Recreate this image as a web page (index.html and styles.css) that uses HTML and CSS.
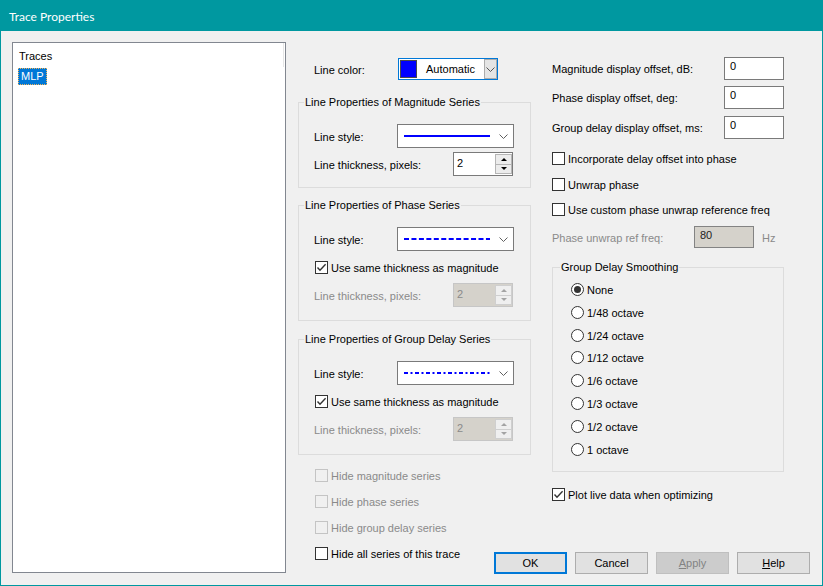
FILE: index.html
```html
<!DOCTYPE html>
<html>
<head>
<meta charset="utf-8">
<title>Trace Properties</title>
<link rel="stylesheet" href="styles.css">
</head>
<body>
<div class="window">
  <div class="titlebar">Trace Properties</div>
  <div class="client">
    <div class="listbox">
      <div class="list-header">Traces</div>
      <div class="list-item"><span class="sel">MLP</span></div>
    </div>
    <div class="main">
      <div class="columns">
        <div class="col-mid">
          <div class="row color-row">
            <span class="lbl w84">Line color:</span>
            <div class="colorcombo">
              <span class="swatch"></span>
              <span class="cc-text">Automatic</span>
              <span class="cc-btn"><svg width="9" height="5" viewBox="0 0 9 5"><polyline points="0.5,0.5 4.5,4.5 8.5,0.5" fill="none" stroke="#555" stroke-width="1"/></svg></span>
            </div>
          </div>

          <fieldset class="group g-mag">
            <legend>Line Properties of Magnitude Series</legend>
            <div class="row grow r-combo">
              <span class="lbl w83">Line style:</span>
              <div class="combo">
                <svg class="linesvg" width="86" height="4" viewBox="0 0 86 4"><line x1="0" y1="2" x2="86" y2="2" stroke="#0000ff" stroke-width="2"/></svg>
                <svg class="chev" width="9" height="5" viewBox="0 0 9 5"><polyline points="0.5,0.5 4.5,4.5 8.5,0.5" fill="none" stroke="#606060" stroke-width="1"/></svg>
              </div>
            </div>
            <div class="row grow r-spin r-spin1">
              <span class="lbl w139">Line thickness, pixels:</span>
              <div class="spin">
                <span class="spin-val">2</span>
                <span class="spin-btns"><span class="sb sb-up"><i class="tri-up"></i></span><span class="sb sb-down"><i class="tri-down"></i></span></span>
              </div>
            </div>
          </fieldset>

          <fieldset class="group g-phase">
            <legend>Line Properties of Phase Series</legend>
            <div class="row grow r-combo">
              <span class="lbl w83">Line style:</span>
              <div class="combo">
                <svg class="linesvg" width="86" height="4" viewBox="0 0 86 4"><line x1="0" y1="2" x2="86" y2="2" stroke="#0000ff" stroke-width="2" stroke-dasharray="5 2.45"/></svg>
                <svg class="chev" width="9" height="5" viewBox="0 0 9 5"><polyline points="0.5,0.5 4.5,4.5 8.5,0.5" fill="none" stroke="#606060" stroke-width="1"/></svg>
              </div>
            </div>
            <div class="row r-check">
              <span class="box"><svg width="11" height="11" viewBox="0 0 11 11"><polyline points="1.5,5.5 4,8.2 9.6,2.2" fill="none" stroke="#333" stroke-width="1.4"/></svg></span>
              <span class="ctext">Use same thickness as magnitude</span>
            </div>
            <div class="row grow r-spin">
              <span class="lbl w139 dis">Line thickness, pixels:</span>
              <div class="spin spin-dis">
                <span class="spin-val">2</span>
                <span class="spin-btns"><span class="sb sb-up"><i class="tri-up"></i></span><span class="sb sb-down"><i class="tri-down"></i></span></span>
              </div>
            </div>
          </fieldset>

          <fieldset class="group g-gd">
            <legend>Line Properties of Group Delay Series</legend>
            <div class="row grow r-combo">
              <span class="lbl w83">Line style:</span>
              <div class="combo">
                <svg class="linesvg" width="86" height="4" viewBox="0 0 86 4"><line x1="0" y1="2" x2="86" y2="2" stroke="#0000ff" stroke-width="2" stroke-dasharray="4 2.5 2 2.5"/></svg>
                <svg class="chev" width="9" height="5" viewBox="0 0 9 5"><polyline points="0.5,0.5 4.5,4.5 8.5,0.5" fill="none" stroke="#606060" stroke-width="1"/></svg>
              </div>
            </div>
            <div class="row r-check">
              <span class="box"><svg width="11" height="11" viewBox="0 0 11 11"><polyline points="1.5,5.5 4,8.2 9.6,2.2" fill="none" stroke="#333" stroke-width="1.4"/></svg></span>
              <span class="ctext">Use same thickness as magnitude</span>
            </div>
            <div class="row grow r-spin">
              <span class="lbl w139 dis">Line thickness, pixels:</span>
              <div class="spin spin-dis">
                <span class="spin-val">2</span>
                <span class="spin-btns"><span class="sb sb-up"><i class="tri-up"></i></span><span class="sb sb-down"><i class="tri-down"></i></span></span>
              </div>
            </div>
          </fieldset>

          <div class="row hide-row first"><span class="box box-dis"></span><span class="ctext dis">Hide magnitude series</span></div>
          <div class="row hide-row"><span class="box box-dis"></span><span class="ctext dis">Hide phase series</span></div>
          <div class="row hide-row"><span class="box box-dis"></span><span class="ctext dis">Hide group delay series</span></div>
        </div>

        <div class="col-right">
          <div class="row erow e1"><span class="lbl w172">Magnitude display offset, dB:</span><span class="edit">0</span></div>
          <div class="row erow e2"><span class="lbl w172">Phase display offset, deg:</span><span class="edit">0</span></div>
          <div class="row erow e3"><span class="lbl w172">Group delay display offset, ms:</span><span class="edit">0</span></div>
          <div class="row rc c1"><span class="box"></span><span class="ctext">Incorporate delay offset into phase</span></div>
          <div class="row rc c2"><span class="box"></span><span class="ctext">Unwrap phase</span></div>
          <div class="row rc c3"><span class="box"></span><span class="ctext">Use custom phase unwrap reference freq</span></div>
          <div class="row freq-row"><span class="lbl w142 dis">Phase unwrap ref freq:</span><span class="edit edit-dis">80</span><span class="hz dis">Hz</span></div>

          <fieldset class="group g-smooth">
            <legend>Group Delay Smoothing</legend>
            <div class="row radio"><svg width="13" height="13" viewBox="0 0 13 13"><circle cx="6.5" cy="6.5" r="6" fill="#fff" stroke="#333" stroke-width="1"/><circle cx="6.5" cy="6.5" r="3.5" fill="#333"/></svg><span class="ctext">None</span></div>
            <div class="row radio"><svg width="13" height="13" viewBox="0 0 13 13"><circle cx="6.5" cy="6.5" r="6" fill="#fff" stroke="#333" stroke-width="1"/></svg><span class="ctext">1/48 octave</span></div>
            <div class="row radio"><svg width="13" height="13" viewBox="0 0 13 13"><circle cx="6.5" cy="6.5" r="6" fill="#fff" stroke="#333" stroke-width="1"/></svg><span class="ctext">1/24 octave</span></div>
            <div class="row radio"><svg width="13" height="13" viewBox="0 0 13 13"><circle cx="6.5" cy="6.5" r="6" fill="#fff" stroke="#333" stroke-width="1"/></svg><span class="ctext">1/12 octave</span></div>
            <div class="row radio"><svg width="13" height="13" viewBox="0 0 13 13"><circle cx="6.5" cy="6.5" r="6" fill="#fff" stroke="#333" stroke-width="1"/></svg><span class="ctext">1/6 octave</span></div>
            <div class="row radio"><svg width="13" height="13" viewBox="0 0 13 13"><circle cx="6.5" cy="6.5" r="6" fill="#fff" stroke="#333" stroke-width="1"/></svg><span class="ctext">1/3 octave</span></div>
            <div class="row radio"><svg width="13" height="13" viewBox="0 0 13 13"><circle cx="6.5" cy="6.5" r="6" fill="#fff" stroke="#333" stroke-width="1"/></svg><span class="ctext">1/2 octave</span></div>
            <div class="row radio"><svg width="13" height="13" viewBox="0 0 13 13"><circle cx="6.5" cy="6.5" r="6" fill="#fff" stroke="#333" stroke-width="1"/></svg><span class="ctext">1 octave</span></div>
          </fieldset>

          <div class="row plot-row"><span class="box"><svg width="11" height="11" viewBox="0 0 11 11"><polyline points="1.5,5.5 4,8.2 9.6,2.2" fill="none" stroke="#333" stroke-width="1.4"/></svg></span><span class="ctext">Plot live data when optimizing</span></div>
        </div>
      </div>

      <div class="bottom">
        <div class="row hide-all"><span class="box"></span><span class="ctext">Hide all series of this trace</span></div>
        <div class="buttons">
          <span class="btn btn-default">OK</span>
          <span class="btn">Cancel</span>
          <span class="btn btn-dis"><u>A</u>pply</span>
          <span class="btn"><u>H</u>elp</span>
        </div>
      </div>
    </div>
  </div>
</div>
</body>
</html>
```

FILE: styles.css
```css
* { box-sizing: border-box; }
html, body { margin: 0; padding: 0; }
body {
  width: 823px;
  height: 586px;
  overflow: hidden;
  background: #f0f0f0;
  font-family: "Liberation Sans", Arial, sans-serif;
  font-size: 11px;
  line-height: 13px;
  color: #000;
}
.window {
  width: 823px;
  height: 586px;
  border: 1px solid #0098a0;
  border-top: 0;
  background: #f0f0f0;
  display: flex;
  flex-direction: column;
}
.titlebar {
  height: 31px;
  flex: none;
  background: #0098a0;
  color: #fff;
  font-family: Lato, "Liberation Sans", sans-serif;
  font-size: 12px;
  padding-left: 8px;
  padding-top: 1px;
  display: flex;
  align-items: center;
}
.client {
  flex: 1;
  display: flex;
  padding: 11px 12px 0 11px;
}
.listbox {
  width: 274px;
  height: 531px;
  flex: none;
  border: 1px solid #828790;
  background: #fff;
}
.list-header {
  height: 24px;
  padding: 2px 0 0 6px;
  display: flex;
  align-items: center;
  border-right: 1px solid #e6e6e6;
  margin-right: 1px;
}
.list-item { margin-top: 1px; padding-left: 5px; }
.sel {
  display: inline-block;
  background: #0078d7;
  color: #fff;
  border: 1px dotted #f2b45a;
  padding: 1px 2px;
}
.main {
  flex: 1;
  margin-left: 12px;
  display: flex;
  flex-direction: column;
}
.columns { display: flex; }
.col-mid { width: 233px; flex: none; }
.col-right { width: 232px; flex: none; margin-left: 21px; }

.row { display: flex; align-items: center; }
.lbl { flex: none; white-space: nowrap; padding-top: 2px; }
.w83 { width: 83px; }
.w84 { width: 84px; }
.w139 { width: 139px; }
.w142 { width: 142px; }
.w172 { width: 172px; }
.dis { color: #8a8a8a; }

/* line color */
.color-row { margin-top: 16px; height: 22px; padding-left: 16px; }
.colorcombo {
  width: 100px;
  height: 22px;
  border: 1px solid #0078d7;
  background: #fff;
  display: flex;
  align-items: center;
}
.swatch {
  width: 17px;
  height: 18px;
  margin-left: 1px;
  background: #0000ff;
  border: 1px solid #4b4b4b;
  flex: none;
}
.cc-text { flex: 1; text-align: center; }
.cc-btn {
  width: 13px;
  height: 20px;
  flex: none;
  background: #e5e5e5;
  border: 1px solid #acacac;
  display: flex;
  align-items: center;
  justify-content: center;
}

/* group boxes */
.group {
  margin: 0;
  padding: 15px 0 11px 0;
  border: 1px solid #dcdcdc;
  min-width: 0;
}
.group legend {
  padding: 0 1px;
  margin-left: 5px;
  line-height: 13px;
}
.g-mag { margin-top: 16px; }
.g-phase { margin-top: 11px; padding-bottom: 13px; }
.g-gd { margin-top: 12px; padding-bottom: 13px; }
.grow { padding-left: 15px; }
.r-combo { height: 24px; }
.r-spin { height: 24px; margin-top: 7px; }
.r-spin1 { margin-top: 4px; }
.r-check { height: 17px; margin-top: 8px; padding-left: 16px; }

.combo {
  width: 117px;
  height: 24px;
  border: 1px solid #7a7a7a;
  background: #fff;
  display: flex;
  align-items: center;
  padding: 0 5px 0 6px;
}
.linesvg { display: block; flex: none; }
.chev { display: block; margin-left: auto; flex: none; }

.spin {
  width: 60px;
  height: 24px;
  border: 1px solid #7a7a7a;
  background: #fff;
  display: flex;
  align-items: center;
  padding-left: 3px;
}
.spin-val { flex: 1; align-self: flex-start; padding-top: 4px; }
.spin-btns {
  width: 17px;
  height: 20px;
  flex: none;
  display: flex;
  flex-direction: column;
  border: 1px solid #b5b5b5;
  background: #ececec;
}
.sb { flex: 1; display: flex; align-items: center; justify-content: center; }
.sb-down { border-top: 1px solid #b5b5b5; }
.tri-up, .tri-down { display: block; width: 0; height: 0; border-left: 3px solid transparent; border-right: 3px solid transparent; }
.tri-up { border-bottom: 3px solid #000; }
.tri-down { border-top: 3px solid #000; }
.spin-dis { background: #d5d2cb; border-color: #c6c6c6; color: #8a8a8a; }
.spin-dis .spin-btns { border-color: #cfcfcf; background: #efefef; }
.spin-dis .sb-down { border-top-color: #cfcfcf; }
.spin-dis .tri-up { border-bottom-color: #a3a3a3; }
.spin-dis .tri-down { border-top-color: #a3a3a3; }

/* checkboxes */
.box {
  width: 13px;
  height: 13px;
  flex: none;
  border: 1px solid #333;
  background: #fff;
  display: flex;
  align-items: center;
  justify-content: center;
}
.box svg { display: block; }
.box-dis { border-color: #c4c4c4; background: #f0f0f0; }
.ctext { margin-left: 3px; white-space: nowrap; padding-top: 2px; }

.hide-row { height: 17px; margin-top: 9px; padding-left: 17px; }
.hide-row.first { margin-top: 12px; }

/* right column */
.erow { height: 23px; }
.e1 { margin-top: 15px; }
.e2 { margin-top: 6px; }
.e3 { margin-top: 7px; }
.edit {
  width: 60px;
  height: 23px;
  flex: none;
  border: 1px solid #7a7a7a;
  background: #fff;
  padding: 2px 0 0 5px;
}
.rc { height: 17px; }
.c1 { margin-top: 11px; }
.c2 { margin-top: 9px; }
.c3 { margin-top: 8px; }
.freq-row { height: 22px; margin-top: 8px; }
.edit-dis { height: 22px; background: #d5d2cb; border-color: #838383; color: #222; }
.hz { margin-left: 8px; padding-top: 2px; }

.g-smooth { margin-top: 13px; padding: 4px 0 10px 0; }
.g-smooth legend { margin-left: 7px; }
.radio { height: 22.857px; padding-left: 18px; }
.radio svg { display: block; flex: none; }

.plot-row { height: 17px; margin-top: 14px; }

/* bottom */
.bottom {
  display: flex;
  justify-content: space-between;
  align-items: flex-start;
  margin-top: 9px;
}
.hide-all { height: 17px; margin-left: 17px; }
.buttons { display: flex; gap: 8px; margin-top: 7px; }
.btn {
  width: 73px;
  height: 22px;
  border: 1px solid #adadad;
  background: #e1e1e1;
  display: flex;
  align-items: center;
  justify-content: center;
}
.btn-default { border: 2px solid #0078d7; }
.btn-dis { background: #cccccc; border-color: #bfbfbf; color: #838383; }
```
